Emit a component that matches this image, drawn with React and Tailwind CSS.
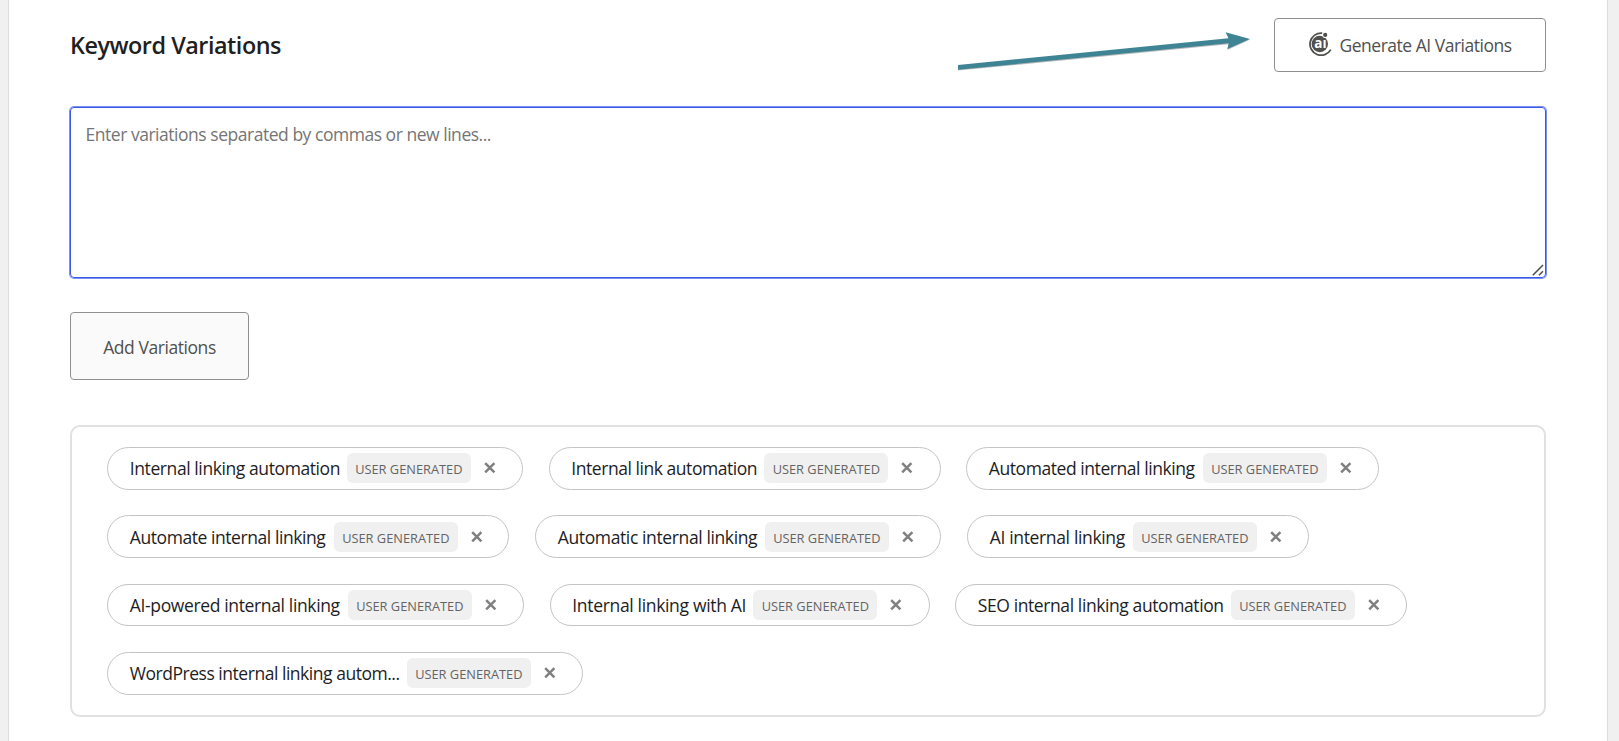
import React from "react";

const ROWS = [
  {
    box: "h-[43px] mb-[25px] gap-[25.5px]",
    pad: "pt-[5px]",
    chips: [
      { text: "Internal linking automation", size: "w-[416px]", label: "w-[210px] tracking-[-0.41px]" },
      { text: "Internal link automation", size: "w-[392px]", label: "w-[186px] tracking-[-0.45px]" },
      { text: "Automated internal linking", size: "w-[413px]", label: "w-[207px] tracking-[-0.43px]" },
    ],
  },
  {
    box: "h-[43px] mb-[26px] gap-[26px]",
    pad: "pt-[6px]",
    chips: [
      { text: "Automate internal linking", size: "w-[402px]", label: "w-[197px] tracking-[-0.43px]" },
      { text: "Automatic internal linking", size: "w-[406px]", label: "w-[200px] tracking-[-0.38px]" },
      { text: "AI internal linking", size: "w-[342px]", label: "w-[136px] tracking-[-0.35px]" },
    ],
  },
  {
    box: "h-[42px] mb-[26px] gap-[25.5px]",
    pad: "pt-[5px]",
    chips: [
      { text: "AI-powered internal linking", size: "w-[417px]", label: "w-[211px] tracking-[-0.36px]" },
      { text: "Internal linking with AI", size: "w-[380px]", label: "w-[174px] tracking-[-0.33px]" },
      { text: "SEO internal linking automation", size: "w-[452px]", label: "w-[246px] tracking-[-0.4px]" },
    ],
  },
  {
    box: "h-[43px] gap-[25.5px]",
    pad: "pt-[5px]",
    chips: [
      { text: "WordPress internal linking autom...", size: "w-[476px]", label: "w-[270px] tracking-[-0.47px]" },
    ],
  },
];

function Chip({ chip, pad }) {
  return (
    <div className={`flex h-full shrink-0 items-start rounded-full border border-[#c3c4c7] bg-white pl-[21.8px] ${pad} ${chip.size}`}>
      <span className={`shrink-0 whitespace-nowrap text-[17.5px] leading-[30px] text-[#1d1d1f] ${chip.label}`}>{chip.text}</span>
      <span className="ml-[7px] flex h-[30px] w-[124px] shrink-0 items-center justify-center rounded-md bg-[#f0f0f0] pt-[3px] text-[12.8px] whitespace-nowrap text-[#646464]">
        USER GENERATED
      </span>
      <button aria-label="Remove" className="ml-[13px] flex h-[30px] w-3 shrink-0 items-center">
        <svg width="12" height="12" viewBox="0 0 12 12" fill="none" stroke="#808080" strokeWidth="2.5">
          <path d="M1.2 1.2l9.2 9.2M10.4 1.2L1.2 10.4" />
        </svg>
      </button>
    </div>
  );
}

function AiLogo() {
  return (
    <svg width="24" height="24" viewBox="0 0 24 24" fill="none">
      <path d="M14.2 1.1A11.1 11.1 0 1 0 22.8 17.6" stroke="#50504f" strokeWidth="1.8" />
      <circle cx="11.8" cy="12" r="8.2" fill="#50504f" />
      <circle cx="17.2" cy="2.9" r="3" fill="#fff" />
      <circle cx="17.2" cy="2.9" r="2.1" fill="#50504f" />
      <text x="12.4" y="15.8" textAnchor="middle" fontFamily="Open Sans, sans-serif" fontWeight="700" fontSize="13.5" fill="#fff">
        aı
      </text>
    </svg>
  );
}

function Arrow() {
  return (
    <svg width="294" height="42" viewBox="0 0 294 42" className="absolute top-[30px] left-[957px]">
      <path d="M1 36.5L271 9.5 293 9.6 270.5 20.1l1-5.9L1 40.6z" fill="#777" opacity="0.5" />
      <path d="M1 35L271.5 8.2 268.6 2.2 293 8.9 270.3 18.9 271.8 13.2 1 39.8z" fill="#3f8494" />
    </svg>
  );
}

export default function App() {
  return (
    <div className="relative flex h-[741px] w-[1619px] justify-start overflow-hidden bg-[#f0f0f1] pl-2 font-['Open_Sans','Noto_Sans',sans-serif]">
      <main className="flex w-[1600px] flex-col border-x border-[#dcdcde] bg-white pt-[18px] pr-[61px] pl-[61px]">
        <header className="flex h-[54px] items-start justify-between">
          <h1 className="pt-[11px] text-[23.4px] leading-8 font-semibold tracking-[-0.48px] text-[#1f1f1f]">Keyword Variations</h1>
          <button className="flex h-[54px] w-[272px] items-start rounded border border-[#8f8f8f] bg-white pt-[13px] pl-[33px]">
            <AiLogo />
            <span className="-mt-[2px] ml-[7.5px] text-[17.5px] leading-[30px] tracking-[-0.49px] whitespace-nowrap text-[#50504f]">Generate AI Variations</span>
          </button>
        </header>
        <div className="relative mt-[35px] h-[171px]">
          <textarea
            placeholder="Enter variations separated by commas or new lines..."
            className="block h-full w-full resize-none rounded-[4px] border border-[#3858e9] px-[14.5px] pt-[11px] text-[17.5px] leading-[30px] tracking-[-0.47px] shadow-[0_0_0_1px_#7b90f0] outline-none placeholder:text-[#757575]"
          />
          <svg width="12" height="12" viewBox="0 0 12 12" fill="none" stroke="#505050" strokeWidth="1.6" className="absolute right-[2px] bottom-[2px]">
            <path d="M.8 11.2L11 1M7 11.2l4-4" />
          </svg>
        </div>
        <button className="mt-[34px] flex h-[68px] w-[179px] shrink-0 justify-center rounded border border-[#8f8f8f] bg-[#fafafa] pt-[19px] text-[17.5px] leading-[30px] tracking-[-0.44px] text-[#50504f]">
          Add Variations
        </button>
        <section className="mt-[45px] flex h-[292px] shrink-0 flex-col rounded-[10px] border-2 border-[#e0e0e0] pt-5 pl-[35px]">
          {ROWS.map((row) => (
            <div key={row.chips[0].text} className={`flex shrink-0 ${row.box}`}>
              {row.chips.map((chip) => (
                <Chip key={chip.text} chip={chip} pad={row.pad} />
              ))}
            </div>
          ))}
        </section>
      </main>
      <Arrow />
    </div>
  );
}
